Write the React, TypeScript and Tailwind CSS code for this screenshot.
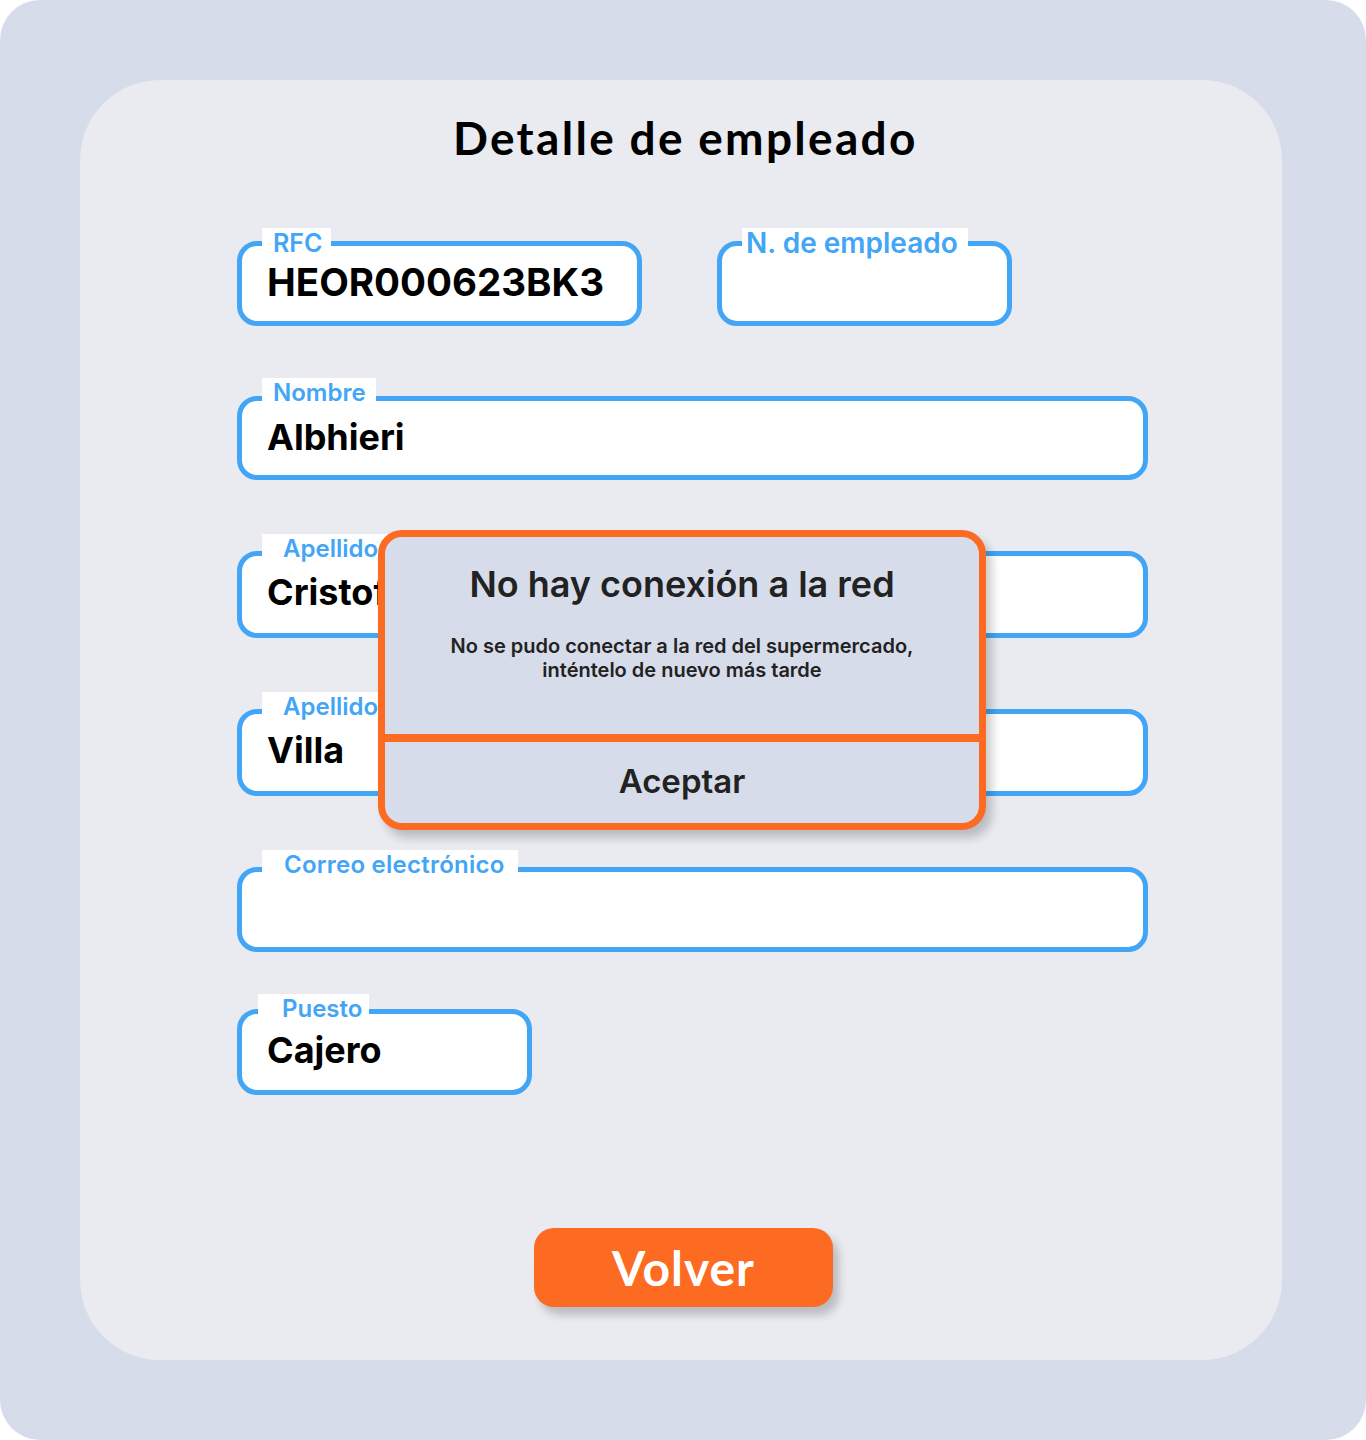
import type { ReactNode } from 'react'

interface FieldProps {
  label: string
  value?: string
  className: string
  labelClass: string
  valueClass?: string
}

function Field({ label, value, className, labelClass, valueClass = 'text-[36px]' }: FieldProps) {
  return (
    <div className={`relative rounded-[20px] border-[5px] border-[#42a5f6] bg-white ${className}`}>
      <span className={`absolute h-[30px] bg-white leading-[30px] font-semibold text-[#42a5f6] ${labelClass}`}>
        {label}
      </span>
      {value && (
        <span className={`absolute left-[25px] top-[14px] leading-[44px] font-bold text-black ${valueClass}`}>
          {value}
        </span>
      )}
    </div>
  )
}

function Dialog({ children }: { children: ReactNode }) {
  return (
    <div className="absolute left-[298px] top-[450px] flex h-[300px] w-[608px] flex-col overflow-hidden rounded-[24px] border-[7px] border-[#fd6a22] bg-[#d7dcea] shadow-[6px_8px_10px_rgba(0,0,0,0.2)]">
      {children}
    </div>
  )
}

export default function App() {
  return (
    <div className="bg-white" style={{ fontFamily: 'Inter, "Noto Sans", sans-serif' }}>
      <div className="w-[1366px] h-[1440px] rounded-[40px] bg-[#d7dcea] pt-[80px] pl-[80px] pr-[84px]">
        <div className="relative flex h-[1280px] flex-col rounded-[80px] bg-[#e9ebf1] pl-[157px] pr-[134px]">
          <h1
            className="mt-[29px] ml-[216px] text-[46px] leading-[58px] font-bold tracking-[0.05em] text-black"
            style={{ fontFamily: 'Lato, "Noto Sans", sans-serif' }}
          >
            Detalle de empleado
          </h1>

          <div className="mt-[74px] flex gap-[75px]">
            <Field
              label="RFC"
              value="HEOR000623BK3"
              className="h-[85px] w-[405px]"
              labelClass="top-[-18px] left-[20px] pl-[11px] pr-[9px] text-[25px]"
              valueClass="text-[38.5px]"
            />
            <Field
              label="N. de empleado"
              className="h-[85px] w-[295px]"
              labelClass="top-[-18px] left-[20px] pl-[4px] pr-[10px] text-[28px]"
            />
          </div>

          <Field label="Nombre" value="Albhieri" className="mt-[70px] h-[84px] w-[911px]" labelClass="top-[-23px] left-[20px] pl-[11px] pr-[10px] text-[24px]" />
          <Field label="Apellido paterno" value="Cristofer" className="mt-[71px] h-[87px] w-[911px]" labelClass="top-[-22px] left-[20px] pl-[21px] pr-[10px] text-[24px]" />
          <Field label="Apellido materno" value="Villa" className="mt-[71px] h-[87px] w-[911px]" labelClass="top-[-22px] left-[20px] pl-[21px] pr-[10px] text-[24px]" />
          <Field label="Correo electrónico" className="mt-[71px] h-[85px] w-[911px]" labelClass="top-[-22px] left-[20px] pl-[22px] pr-[13px] text-[24px] tracking-[0.01em]" />
          <Field label="Puesto" value="Cajero" className="mt-[57px] h-[86px] w-[295px]" labelClass="top-[-20px] left-[16px] pl-[24px] pr-[7px] text-[24px]" />

          <button
            className="mt-[133px] ml-[297px] h-[79px] w-[299px] rounded-[20px] bg-[#fd6a22] text-[48px] leading-[79px] font-bold tracking-[0.02em] text-white shadow-[6px_8px_8px_rgba(0,0,0,0.2)]"
            style={{ fontFamily: 'Lato, "Noto Sans", sans-serif' }}
          >
            Volver
          </button>

          <Dialog>
            <div className="flex h-[197px] flex-col items-center text-[#222]">
              <p className="mt-[25px] text-[36px] leading-[44px] font-semibold">No hay conexión a la red</p>
              <p className="mt-[28px] text-center text-[20px] leading-[24px] font-semibold">
                No se pudo conectar a la red del supermercado,
                <br />
                inténtelo de nuevo más tarde
              </p>
            </div>
            <div className="h-[8px] bg-[#fd6a22]" />
            <div className="flex flex-1 items-center justify-center pb-[2px] text-[33px] font-semibold text-[#222]">
              Aceptar
            </div>
          </Dialog>
        </div>
      </div>
    </div>
  )
}
